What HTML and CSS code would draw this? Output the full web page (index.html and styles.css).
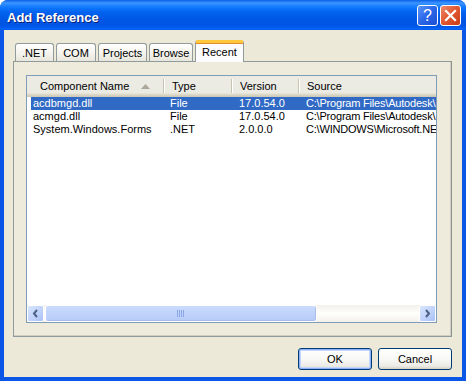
FILE: index.html
```html
<html>

<head>
    <title>Add Reference</title>
    <link rel="stylesheet" href="styles.css">
</head>

<body>
    <div class="window">
        <div class="titlebar">
            <span class="title">Add Reference</span>
            <div class="caption-buttons">
                <span class="cap help">?</span>
                <span class="cap close">
                    <svg width="13" height="13" viewBox="0 0 13 13">
                        <path d="M2 2 L11 11 M11 2 L2 11" stroke="#fff" stroke-width="2.2" stroke-linecap="square"/>
                    </svg>
                </span>
            </div>
        </div>
        <div class="client">
            <div class="tabs">
                <span class="tab">.NET</span>
                <span class="tab">COM</span>
                <span class="tab">Projects</span>
                <span class="tab">Browse</span>
                <span class="tab active">Recent</span>
            </div>
            <div class="panel">
                <div class="listview">
                    <div class="header">
                        <div class="hcol c1">Component Name
                            <svg class="sort" width="9" height="5" viewBox="0 0 9 5">
                                <path d="M0 5 L4.5 0 L9 5 Z" fill="#aca899"/>
                            </svg>
                        </div>
                        <div class="hcol c2">Type</div>
                        <div class="hcol c3">Version</div>
                        <div class="hcol c4">Source</div>
                    </div>
                    <div class="rows">
                        <div class="row selected">
                            <span class="c1">acdbmgd.dll</span>
                            <span class="c2">File</span>
                            <span class="c3">17.0.54.0</span>
                            <span class="c4">C:\Program Files\Autodesk\</span>
                        </div>
                        <div class="row">
                            <span class="c1">acmgd.dll</span>
                            <span class="c2">File</span>
                            <span class="c3">17.0.54.0</span>
                            <span class="c4">C:\Program Files\Autodesk\</span>
                        </div>
                        <div class="row">
                            <span class="c1">System.Windows.Forms</span>
                            <span class="c2">.NET</span>
                            <span class="c3">2.0.0.0</span>
                            <span class="c4">C:\WINDOWS\Microsoft.NET</span>
                        </div>
                    </div>
                    <div class="hscroll">
                        <span class="arrow">
                            <svg width="7" height="9" viewBox="0 0 7 9">
                                <path d="M5 1 L2 4.5 L5 8" stroke="#4d6185" stroke-width="2" fill="none"/>
                            </svg>
                        </span>
                        <div class="track">
                            <div class="thumb">
                                <svg width="8" height="7" viewBox="0 0 8 7">
                                    <path d="M0.5 0 V7 M2.5 0 V7 M4.5 0 V7 M6.5 0 V7" stroke="#8aa6e3" stroke-width="1"/>
                                </svg>
                            </div>
                        </div>
                        <span class="arrow">
                            <svg width="7" height="9" viewBox="0 0 7 9">
                                <path d="M2 1 L5 4.5 L2 8" stroke="#4d6185" stroke-width="2" fill="none"/>
                            </svg>
                        </span>
                    </div>
                </div>
            </div>
            <div class="actions">
                <button type="button" class="default">OK</button>
                <button type="button">Cancel</button>
            </div>
        </div>
    </div>
</body>

</html>
```

FILE: styles.css
```css
body {
    margin: 0;
    font-family: "Liberation Sans", Arial, sans-serif;
    font-size: 11px;
    color: #000;
}

.window {
    width: 466px;
    height: 381px;
    display: flex;
    flex-direction: column;
    background: #0a56e6;
    border-radius: 8px 8px 0 0;
    overflow: hidden;
}

.titlebar {
    height: 30px;
    display: flex;
    align-items: center;
    justify-content: space-between;
    padding: 0 5px 0 7px;
    background: linear-gradient(to bottom, #0a5fe8 0%, #3d95ff 10%, #1f84ff 18%, #0b72fb 28%, #0262ee 42%, #0058e6 62%, #0055e3 80%, #0058ea 90%, #0866f8 96%, #0058e8 100%);
}

.title {
    color: #fff;
    font-size: 13px;
    font-weight: bold;
    text-shadow: 1px 1px 0 #0a1e72;
    margin-top: 4px;
}

.caption-buttons {
    display: flex;
    gap: 2px;
    margin-top: 1px;
}

.cap {
    width: 21px;
    height: 21px;
    box-sizing: border-box;
    border: 1px solid #fff;
    border-radius: 3px;
    display: flex;
    align-items: center;
    justify-content: center;
    color: #fff;
    font-size: 16px;
}

.help {
    background: linear-gradient(135deg, #5b95f8 0%, #2a66e8 50%, #1c4fd3 100%);
}

.close {
    background: linear-gradient(135deg, #ee8a6e 0%, #e25a33 45%, #c93d16 100%);
}

.client {
    flex: 1;
    margin: 0 4px 4px 4px;
    background: #ece9d8;
    display: flex;
    flex-direction: column;
}

.tabs {
    display: flex;
    align-items: flex-end;
    gap: 2px;
    height: 21px;
    margin: 10px 0 0 11px;
    position: relative;
    z-index: 1;
}

.tab {
    height: 18px;
    box-sizing: border-box;
    padding: 0 6px;
    border: 1px solid #919b9c;
    border-bottom: none;
    border-radius: 3px 3px 0 0;
    background: linear-gradient(to bottom, #fff 0%, #f5f4ef 50%, #e8e6dc 100%);
    display: flex;
    align-items: center;
    justify-content: center;
}

.tab:nth-child(1) { width: 39px; }
.tab:nth-child(2) { width: 40px; }
.tab:nth-child(3) { width: 49px; }
.tab:nth-child(4) { width: 44px; }

.tab.active {
    width: 49px;
    height: 22px;
    margin-bottom: -1px;
    padding-bottom: 2px;
    background: #fcfcfe;
    border-top: 3px solid #ffc83c;
    box-shadow: inset 0 1px 0 #e68b2c;
}

.panel {
    width: 439px;
    height: 276px;
    box-sizing: border-box;
    margin-left: 9px;
    border: 1px solid #919b9c;
    border-right-color: #8a9394;
    box-shadow: inset -1px -1px 0 #d0cebf;
    background: #eeebdc;
    padding: 13px 0 0 12px;
}

.listview {
    width: 411px;
    height: 248px;
    box-sizing: border-box;
    border: 1px solid #7f9db9;
    background: #fff;
    display: flex;
    flex-direction: column;
}

.header {
    height: 21px;
    flex: none;
    display: flex;
    background: linear-gradient(to bottom, #ebeae3 0%, #ebeae3 80%, #e2decd 86%, #d6d2c2 92%, #cbc7b8 100%);
}

.hcol {
    display: flex;
    align-items: center;
    box-sizing: border-box;
    padding-left: 9px;
    padding-bottom: 1px;
    position: relative;
}

.hcol.c1 {
    width: 136px;
    padding-left: 13px;
}

.hcol.c2 { width: 68px; }
.hcol.c3 { width: 67px; }
.hcol.c4 { flex: 1; }

.hcol.c2::before,
.hcol.c3::before,
.hcol.c4::before {
    content: "";
    position: absolute;
    left: 0;
    top: 3px;
    height: 14px;
    width: 1px;
    background: #c7c5b2;
    box-shadow: 1px 0 0 #fff;
}

.sort {
    margin-left: 12px;
}

.rows {
    flex: 1;
    padding: 0 0 0 4px;
    overflow: hidden;
}

.row {
    display: flex;
    height: 13px;
    line-height: 13px;
    white-space: nowrap;
}

.row span {
    box-sizing: border-box;
    overflow: hidden;
    flex: none;
}

.row .c1 { width: 132px; padding-left: 2px; }
.row .c2 { width: 68px; padding-left: 7px; }
.row .c3 { width: 67px; padding-left: 8px; }
.row .c4 { width: 138px; padding-left: 8px; letter-spacing: -0.2px; }

.row.selected {
    background: #316ac5;
    color: #fff;
}

.hscroll {
    height: 17px;
    flex: none;
    display: flex;
    align-items: center;
    background: linear-gradient(to bottom, #f3f1ec 0%, #fefefb 50%, #f3f1ec 100%);
}

.arrow {
    width: 17px;
    height: 17px;
    box-sizing: border-box;
    border: 1px solid #fff;
    border-radius: 2px;
    background: linear-gradient(135deg, #d8e5fd 0%, #bed1fa 60%, #a9c1f6 100%);
    display: flex;
    align-items: center;
    justify-content: center;
    flex: none;
}

.track {
    flex: 1;
    height: 17px;
    display: flex;
}

.thumb {
    width: 272px;
    height: 17px;
    box-sizing: border-box;
    margin-left: 1px;
    border: 1px solid #fff;
    border-radius: 3px;
    background: linear-gradient(to bottom, #cadbfd 0%, #c1d3fb 50%, #b6cbf8 100%);
    box-shadow: inset -1px -1px 0 #a9bde8;
    display: flex;
    align-items: center;
    justify-content: center;
}

.actions {
    display: flex;
    justify-content: flex-end;
    gap: 6px;
    margin: 11px 10px 0 0;
}

button {
    width: 74px;
    height: 22px;
    font-family: "Liberation Sans", Arial, sans-serif;
    font-size: 11px;
    color: #000;
    border: 1px solid #003c74;
    border-radius: 3px;
    background: linear-gradient(to bottom, #fff 0%, #f8f8f5 50%, #ecebe6 85%, #d6d0c5 100%);
    padding: 0;
}

button.default {
    box-shadow: inset 0 0 0 1px #8fb0f7, inset 0 0 0 2px #c6d7fc;
}
```
